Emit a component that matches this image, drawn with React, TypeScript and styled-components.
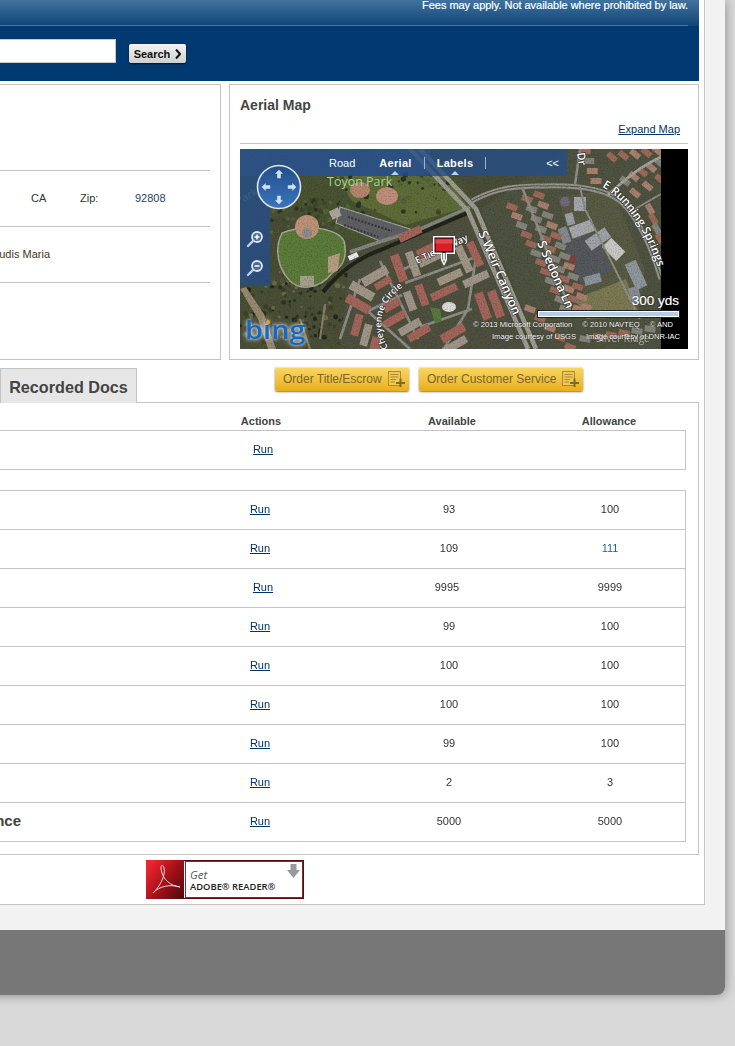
import React from "react";
import styled, { createGlobalStyle } from "styled-components";

const Global = createGlobalStyle`
  html, body { margin: 0; padding: 0; background: #d9d9d9; overflow: hidden; }
  body { font-family: "Liberation Sans", Arial, sans-serif; font-size: 11px; color: #333; }
`;

const Viewport = styled.div`
  width: 735px;
  height: 1046px;
  overflow: hidden;
`;
const Shell = styled.div`
  margin-left: -320px;
  width: 1045px;
  height: 995px;
  background: #f2f2f2;
  border-radius: 0 0 8px 8px;
  box-shadow: 0 0 12px rgba(0, 0, 0, 0.38);
  display: flex;
  flex-direction: column;
`;
const Panel = styled.div`
  width: 1025px;
  box-sizing: border-box;
  background: #fff;
  border-right: 1px solid #c4c4c4;
  border-bottom: 1px solid #c4c4c4;
  padding-right: 5px;
`;
const Footer = styled.footer`
  margin-top: 25px;
  height: 65px;
  background: #777;
  border-radius: 0 0 8px 8px;
`;

const Header = styled.header`
  height: 81px;
  background: #003a70;
`;
const HeaderGlow = styled.div`
  background: linear-gradient(#42729e, #0e4576);
  height: 26px;
`;
const FeeStrip = styled.div`
  height: 25px;
  margin-right: 11px;
  border-bottom: 1px solid #4b78a5;
  color: #fff;
  font-size: 11px;
  line-height: 11px;
  letter-spacing: -0.03px;
  text-align: right;
  -webkit-text-stroke: 0.2px #fff;
`;
const SearchRow = styled.div`
  display: flex;
  justify-content: flex-end;
  align-items: flex-start;
  gap: 13px;
  margin-top: 13px;
  padding-right: 513px;
`;
const SearchInput = styled.div`
  width: 420px;
  height: 24px;
  box-sizing: border-box;
  background: #fff;
  border: 1px solid #c9c9c9;
`;
const SearchButton = styled.button`
  margin-top: 5px;
  width: 57px;
  height: 19px;
  padding: 0;
  border: 0;
  border-radius: 2px;
  background: linear-gradient(#f4f4f4, #cfcfcf);
  box-shadow: 0 1px 2px rgba(0, 0, 0, 0.7);
  font: bold 11px "Liberation Sans", Arial, sans-serif;
  color: #111;
  display: flex;
  align-items: center;
  justify-content: center;
  gap: 5px;
`;

const Cards = styled.div`
  display: grid;
  grid-template-columns: 1fr 470px;
  gap: 8px;
  margin-top: 3px;
  height: 276px;
`;
const Card = styled.section`
  box-sizing: border-box;
  border: 1px solid #c4c4c4;
  background: #fff;
`;
const InfoCard = styled(Card)`
  padding-right: 10px;
`;
const InfoRow = styled.div<{ $h: number }>`
  height: ${(p) => p.$h}px;
  box-sizing: border-box;
  border-bottom: 1px solid #c4c4c4;
  padding-bottom: 2px;
  display: flex;
  justify-content: flex-end;
  align-items: center;
`;
const InfoCell = styled.span<{ $w: number; $blue?: boolean }>`
  width: ${(p) => p.$w}px;
  color: ${(p) => (p.$blue ? "#1f3f6e" : "#333")};
`;
const Owner = styled.span`
  margin-right: 160px;
  color: #4a3320;
  white-space: nowrap;
`;
const MapCard = styled(Card)`
  padding: 0 10px;
`;
const MapTitle = styled.h2`
  margin: 12px 0 0;
  font-size: 14px;
  line-height: 16px;
  font-weight: bold;
  color: #444;
`;
const ExpandRow = styled.div`
  margin-top: 10px;
  height: 20px;
  padding-right: 8px;
  text-align: right;
  line-height: 13px;
  border-bottom: 1px solid #c4c4c4;
`;
const A = styled.a`
  color: #003366;
  text-decoration: underline;
  font-size: 11px;
`;
const MapBox = styled.div`
  position: relative;
  margin-top: 5px;
  width: 448px;
  height: 200px;
  overflow: hidden;
  background: #000;
  svg { display: block; }
`;
const MapBar = styled.div`
  position: absolute;
  left: 0;
  top: 0;
  width: 327px;
  height: 27px;
  box-sizing: border-box;
  padding: 0 8px 0 89px;
  display: flex;
  align-items: center;
  gap: 12px;
  background: rgba(38, 78, 132, 0.8);
  color: #fff;
`;
const MapRail = styled.div`
  position: absolute;
  left: 0;
  top: 27px;
  width: 30px;
  height: 110px;
  box-sizing: border-box;
  padding: 54px 0 0 6px;
  display: flex;
  flex-direction: column;
  gap: 11px;
  background: rgba(38, 78, 132, 0.84);
  svg { flex: none; }
`;
const MapTab = styled.span<{ $on?: boolean }>`
  position: relative;
  font: ${(p) => (p.$on ? "bold" : "normal")} 11px "Liberation Sans", Arial, sans-serif;
  letter-spacing: ${(p) => (p.$on ? "0.3px" : "0")};
  &::after {
    content: "";
    display: ${(p) => (p.$on ? "block" : "none")};
    position: absolute;
    left: 50%;
    bottom: -6px;
    margin-left: -4px;
    border: 4px solid transparent;
    border-top: 0;
    border-bottom: 4px solid #bcd0ea;
  }
`;
const RoadTab = styled(MapTab)`
  margin-right: 12px;
`;
const CollapseTab = styled(MapTab)`
  margin-left: auto;
`;
const MapSep = styled.i`
  width: 1px;
  height: 12px;
  background: #9db4d2;
`;
const Compass = styled.div`
  position: absolute;
  left: 16px;
  top: 15px;
`;
const Pin = styled.div`
  position: absolute;
  left: 190px;
  top: 85px;
`;
const BingMark = styled.span`
  position: absolute;
  left: 5px;
  top: 165px;
  font: 600 25px/30px "Open Sans", sans-serif;
  color: #1668c4;
  transform: scaleX(1.16);
  transform-origin: left top;
  text-shadow: 0 0 3px rgba(255, 255, 255, 0.9), 0 0 6px rgba(255, 255, 255, 0.6);
`;
const BingDot = styled.i`
  position: absolute;
  left: 26px;
  top: 171px;
  width: 4px;
  height: 4px;
  border-radius: 50%;
  background: #f2a020;
`;
const ScaleBlock = styled.div`
  position: absolute;
  left: 298px;
  top: 144px;
  width: 141px;
  display: flex;
  flex-direction: column;
  gap: 2px;
`;
const ScaleLabel = styled.span`
  align-self: flex-end;
  color: #fff;
  font-size: 13.5px;
  line-height: 16px;
  text-shadow: 0 0 2px #000;
  -webkit-text-stroke: 0.2px #fff;
`;
const ScaleBar = styled.div`
  height: 6px;
  box-sizing: border-box;
  background: #b4cdec;
  border: 1px solid #fff;
  outline: 1px solid #222;
`;
const Credits = styled.div`
  position: absolute;
  left: 233px;
  top: 171px;
  display: flex;
  flex-direction: column;
  gap: 2px;
  color: #fff;
  font-size: 7.6px;
  line-height: 10px;
  white-space: nowrap;
  text-shadow: 0 0 1px #000;
`;
const CreditLine = styled.div`
  display: flex;
  gap: 10px;
`;
const CreditLineLow = styled(CreditLine)`
  padding-left: 19px;
`;

const ActionRow = styled.div`
  height: 42px;
  display: flex;
  align-items: flex-start;
  padding-left: 320px;
`;
const Tab = styled.div`
  box-sizing: border-box;
  margin-top: 8px;
  width: 137px;
  height: 35px;
  border: 1px solid #c4c4c4;
  border-bottom: 0;
  background: #e6e6e6;
  color: #444;
  font-size: 16.2px;
  font-weight: bold;
  line-height: 37px;
  text-align: center;
  position: relative;
  z-index: 1;
`;
const Orders = styled.div`
  display: flex;
  gap: 10px;
  margin: 7px 0 0 138px;
`;
const OrderBtn = styled.button<{ $w: number }>`
  box-sizing: border-box;
  width: ${(p) => p.$w}px;
  height: 24px;
  padding: 0 3px 0 8px;
  border: 0;
  border-radius: 2px;
  background: linear-gradient(#f8d863, #e9ae1e);
  box-shadow: 0 1px 2px rgba(0, 0, 0, 0.55), inset 0 1px 0 #fbe9a8;
  font: 12px "Liberation Sans", Arial, sans-serif;
  color: #7a6628;
  display: flex;
  align-items: center;
  justify-content: space-between;
  white-space: nowrap;
`;

const TablePanel = styled.section`
  height: 453px;
  box-sizing: border-box;
  border: 1px solid #c4c4c4;
  padding-right: 12px;
  background: #fff;
`;
const gridCols = `grid-template-columns: 1fr 212px 166px 154px;`;
const HeadRow = styled.div`
  display: grid;
  ${gridCols}
  height: 27px;
  align-items: end;
  font-weight: bold;
  color: #444;
  line-height: 13px;
  text-align: center;
`;
const HeadCell = styled.span<{ $shift?: number }>`
  padding-left: ${(p) => (p.$shift ?? 0) * 2}px;
  padding-bottom: 2px;
`;
const Group = styled.div`
  border: 1px solid #c4c4c4;
  border-left: 0;
  & + & { margin-top: 20px; }
`;
const Row = styled.div`
  display: grid;
  ${gridCols}
  height: 39px;
  box-sizing: border-box;
  padding-bottom: 2px;
  align-items: center;
  text-align: center;
  border-bottom: 1px solid #c4c4c4;
  &:last-child { height: 38px; border-bottom: 0; }
`;
const Cell = styled.span<{ $shift?: number; $blue?: boolean }>`
  padding-left: ${(p) => Math.max(p.$shift ?? 0, 0) * 2}px;
  padding-right: ${(p) => Math.max(-(p.$shift ?? 0), 0) * 2}px;
  color: ${(p) => (p.$blue ? "#1f5f9e" : "#333")};
  will-change: transform;
`;
const RowLabel = styled.span`
  text-align: right;
  padding: 0 132px 1px 0;
  font-size: 15px;
  font-weight: bold;
  color: #444;
  white-space: nowrap;
`;
const BadgeRow = styled.div`
  height: 49px;
  padding: 5px 0 0 466px;
  box-sizing: border-box;
`;
const Adobe = styled.div`
  width: 158px;
  height: 39px;
  display: flex;
`;
const AdobeMark = styled.div`
  width: 38px;
  flex: none;
  background: linear-gradient(125deg, #ee2530 10%, #a01018 55%, #4e0810 100%);
`;
const AdobeBox = styled.div`
  flex: 1;
  position: relative;
  background: #fff;
  border: 1px solid #5a0a12;
  border-left: 0;
  outline: 1px solid #7a2a30;
  outline-offset: -2px;
  padding: 7px 0 0 6px;
`;
const AdobeGet = styled.div`
  font: italic 11.5px/13px "Open Sans", sans-serif;
  color: #555;
`;
const AdobeName = styled.div`
  font: 600 9.4px/11px "Open Sans", sans-serif;
  color: #222;
  white-space: nowrap;
`;
const AdobeArrow = styled.svg`
  position: absolute;
  right: 3px;
  top: 3px;
`;

function mulberry(seed: number) {
  return () => {
    seed |= 0;
    seed = (seed + 0x6d2b79f5) | 0;
    let t = Math.imul(seed ^ (seed >>> 15), 1 | seed);
    t = (t + Math.imul(t ^ (t >>> 7), 61 | t)) ^ t;
    return ((t ^ (t >>> 14)) >>> 0) / 4294967296;
  };
}

function houses(key: string, x1: number, y1: number, x2: number, y2: number, n: number, rot: number, seed: number) {
  const r = mulberry(seed);
  const out: React.ReactNode[] = [];
  for (let i = 0; i < n; i++) {
    const x = x1 + ((x2 - x1) * i) / (n - 1);
    const y = y1 + ((y2 - y1) * i) / (n - 1);
    const v = r();
    const c = v > 0.55 ? "#9c6a58" : v > 0.25 ? "#86857c" : "#a98070";
    out.push(<rect key={key + i} x={x - 5.5} y={y - 3} width={11} height={6} fill={c} transform={`rotate(${rot} ${x} ${y})`} />);
  }
  return out;
}

function trees(key: string, n: number, x: number, y: number, w: number, h: number, seed: number, cols: string[]) {
  const r = mulberry(seed);
  const out: React.ReactNode[] = [];
  for (let i = 0; i < n; i++) {
    out.push(
      <circle key={key + i} cx={x + r() * w} cy={y + r() * h} r={0.8 + r() * 2.2} fill={cols[Math.floor(r() * cols.length)]} />
    );
  }
  return out;
}

const R = "#a3655b";
const G = "#a19688";
const longs: [number, number, number, number, number, string][] = [
  [159, 119, 9, 28, -20, R], [173, 115, 8, 26, -20, G], [135, 127, 28, 9, -30, G], [143, 134, 18, 7, -30, R],
  [122, 142, 26, 9, 30, G], [118, 155, 26, 9, 30, R], [152, 156, 18, 8, -30, R], [182, 146, 8, 22, -20, R],
  [170, 152, 8, 20, -20, G], [155, 170, 24, 8, -30, R], [210, 128, 26, 8, -25, G], [204, 143, 28, 8, -25, R],
  [236, 130, 27, 8, -25, G], [243, 157, 9, 28, -20, R], [256, 155, 9, 28, -20, R], [235, 105, 8, 26, -25, R],
  [224, 110, 8, 28, -25, G], [190, 100, 28, 9, -25, R], [190, 110, 24, 8, -25, G], [170, 178, 24, 8, -30, G],
  [179, 184, 24, 8, -30, R], [213, 184, 26, 9, -30, R], [117, 176, 8, 22, 15, R], [126, 186, 8, 22, 15, G],
  [215, 196, 26, 8, -30, G], [135, 198, 10, 20, 15, R], [170, 85, 24, 8, -25, R],
];

const forest = ["#2c3524", "#3a4329", "#6c6b4c", "#4e5236", "#23291c"];
const leafy = ["#2c3524", "#3f4a2a", "#55633a"];

function AerialMap() {
  return (
    <svg width={448} height={200} viewBox="0 0 448 200" role="img" aria-label="Aerial map">
      <defs>
        <filter id="grain" x="0" y="0" width="100%" height="100%">
          <feTurbulence type="fractalNoise" baseFrequency="0.7" numOctaves={2} seed={7} />
          <feColorMatrix values="0 0 0 0 0  0 0 0 0 0  0 0 0 0 0  0 0 0 1.6 -0.7" />
        </filter>
        <filter id="soft"><feGaussianBlur stdDeviation="0.4" /></filter>
        <path id="lblSprings" d="M362 38 C 385 50 410 85 422 134" />
        <path id="lblCircle" d="M148 199 C 134 172 142 150 170 133" />
      </defs>
      <g filter="url(#soft)">
        <rect width="448" height="200" fill="#4a4e38" />
        <path d="M0 130 L60 150 L120 110 L110 200 L0 200Z" fill="#4b5037" />
        <path d="M0 0H200L240 60L125 100L60 60L30 70L0 50Z" fill="#4a5433" />
        <path d="M96 27H205L228 58L165 76L112 52Z" fill="#5f6d38" />
        <path d="M0 0H190V27H0Z" fill="#47627a" />
        {trees("t1", 190, 0, 120, 115, 80, 21, forest)}
        {trees("t2", 90, 30, 50, 70, 40, 22, leafy)}
        {trees("t3", 60, 100, 25, 110, 40, 23, leafy)}
        <path d="M0 140 L18 170 L28 200 L36 200 L24 165 L6 138Z" fill="#968a70" />
        <path d="M60 170 L70 200 M85 155 L80 190" stroke="#8b8069" strokeWidth="2" fill="none" />
        {/* park */}
        <path d="M42 84 C 68 74 98 80 104 92 C 108 110 102 118 92 124 C 80 140 60 142 50 132 C 38 120 34 100 42 84Z" fill="#5c7b3a" stroke="#a5a590" strokeWidth="1.6" />
        <rect x="60" y="127" width="14" height="10" fill="#a5a08c" />
        <path d="M88 108 L100 104 L98 122 L88 124Z" fill="#b59e80" />
        <circle cx="67" cy="78" r="12" fill="#bd9378" />
        <circle cx="67" cy="84" r="5" fill="#8d8c8e" />
        <ellipse cx="120" cy="41" rx="10" ry="8" fill="#b68570" />
        <ellipse cx="147" cy="47" rx="11" ry="9" fill="#bf8f7b" />
        <path d="M100 58 L170 80 L165 88 L140 92 L96 74Z" fill="#5e6164" stroke="#a6a59a" strokeWidth="1.2" />
        <path d="M108 68 L152 82 M104 76 L138 88" stroke="#35373a" strokeWidth="2" strokeDasharray="2 1.5" />
        <rect x="90" y="60" width="10" height="9" fill="#aaa99c" transform="rotate(-25 95 64)" />
        {/* right side base */}
        <path d="M240 60 L300 200 H421 V0 H330Z" fill="#4f5340" />
        <path d="M110 100 L232 66 L284 200 H100Z" fill="#50513f" />
        {/* creek + park road */}
        <path d="M83 143 C 100 122 120 108 143 100 L 230 63" stroke="#20251a" strokeWidth="4" fill="none" />
        <path d="M110 103 L133 95 L180 80 L230 58" stroke="#85867e" strokeWidth="3.5" fill="none" />
        <rect x="108" y="105" width="10" height="5" fill="#eee" transform="rotate(-25 113 107)" />
        {/* school */}
        <path d="M318 48 L372 40 L405 120 L398 165 L350 165Z" fill="#595b45" />
        <path d="M322 92 L356 84 L372 122 L340 134 Z" fill="#55585c" />
        <path d="M335 150 L386 130 L400 168 L346 170Z" fill="#7b7a52" />
        <circle cx="325" cy="53" r="5" fill="#6f6a7d" />
        <rect x="334" y="48" width="12" height="14" fill="#a4a7ad" />
        <rect x="326" y="64" width="8" height="12" fill="#9da0a5" transform="rotate(-15 330 70)" />
        <rect x="330" y="74" width="24" height="12" fill="#a6a9ae" transform="rotate(-20 342 80)" />
        <rect x="320" y="78" width="9" height="16" fill="#858a90" transform="rotate(-20 325 86)" />
        <rect x="346" y="84" width="24" height="12" fill="#9fa3a8" transform="rotate(-35 358 90)" />
        <rect x="364" y="94" width="20" height="13" fill="#c9c8c4" transform="rotate(45 374 100)" />
        <rect x="344" y="126" width="17" height="9" fill="#8b949c" transform="rotate(-15 352 130)" />
        <rect x="390" y="112" width="12" height="28" fill="#8f969c" transform="rotate(-25 396 126)" />
        <rect x="390" y="138" width="10" height="16" fill="#8a9096" transform="rotate(-15 395 146)" />
        <circle cx="332" cy="110" r="4" fill="#83423f" />
        {/* houses right */}
        {houses("a", 272, 58, 325, 160, 12, 20, 1)}
        {houses("b", 287, 50, 338, 160, 12, 20, 2)}
        {houses("c", 299, 46, 346, 158, 12, 20, 3)}
        {houses("d", 345, 2, 356, 32, 4, 0, 4)}
        {houses("e", 372, 8, 418, 2, 5, 40, 5)}
        {houses("f", 385, 32, 420, 14, 5, 40, 6)}
        {houses("g", 395, 44, 420, 30, 3, 40, 7)}
        {houses("h", 410, 60, 420, 90, 4, 60, 8)}
        {houses("i", 290, 160, 330, 198, 5, 20, 9)}
        {houses("j", 345, 190, 410, 180, 6, 10, 10)}
        {/* big roads */}
        <path d="M170 0 L228 62 L288 200" stroke="#9c9c92" strokeWidth="4.5" fill="none" />
        <path d="M180 0 L236 60 L296 200" stroke="#9c9c92" strokeWidth="4.5" fill="none" />
        <path d="M232 52 C 250 42 270 36 305 37 C 340 36 365 40 380 52 C 400 70 412 100 421 130" stroke="#96968c" strokeWidth="5" fill="none" />
        <path d="M232 52 C 250 42 270 36 305 37 C 340 36 365 40 380 52 C 400 70 412 100 421 130" stroke="#4f504c" strokeWidth="1" fill="none" />
        <path d="M368 46 C 385 30 405 15 421 8" stroke="#a3a39a" strokeWidth="3" fill="none" />
        <path d="M282 38 L330 160 M340 0 L335 36" stroke="#8f8f86" strokeWidth="2.5" fill="none" />
        <path d="M395 60 L421 45 M340 38 L345 60 L400 170" stroke="#8e8e86" strokeWidth="2" fill="none" />
        {/* complex roads */}
        <path d="M112 148 L170 200 M140 112 L178 190 M165 134 L236 108 L228 160 L205 198 M160 122 L222 92 M180 178 L232 160 M128 162 L162 146 M100 190 L120 130" stroke="#8f8e85" strokeWidth="2.6" fill="none" />
        {longs.map(([x, y, w, h, rot, c], i) => (
          <rect key={i} x={x - w / 2} y={y - h / 2} width={w} height={h} fill={c} transform={`rotate(${rot} ${x} ${y})`} />
        ))}
        <ellipse cx="209" cy="158" rx="7" ry="5" fill="#dcdcd6" />
        <path d="M190 158 L200 160 L202 172 L195 174Z" fill="#577a3e" />
        <rect width="421" height="200" filter="url(#grain)" opacity="0.28" />
        <rect x="421" width="27" height="200" fill="#000" />
      </g>
      <g fontFamily="'Open Sans', sans-serif" fill="#fff" fontSize="12.5" stroke="#2a2a26" strokeWidth="1.1" paintOrder="stroke" fontWeight="600">
        <text x="87" y="37" fill="#a6d392" stroke="none" fontSize="12.5" fontWeight="400">Toyon Park</text>
        <text x="-2" y="56" fill="#9cb3cc" stroke="none" fontSize="11" fontWeight="400" transform="rotate(-28 -2 56)">Park</text>
        <text x="337" y="4" fontSize="11" transform="rotate(82 337 4)">Dr</text>
        <text x="238" y="84" fontSize="13" transform="rotate(67 238 84)">S Weir Canyon</text>
        <text x="297" y="94" transform="rotate(66 297 94)">S Sedona Ln</text>
        <text fontSize="11.5"><textPath href="#lblSprings">E Running Springs</textPath></text>
        <text fontSize="9"><textPath href="#lblCircle">Cheyenne Circle</textPath></text>
        <text x="177" y="115" fontSize="9.5" transform="rotate(-25 177 115)">E Tierra Way</text>
        <text x="356" y="193" fontSize="10" opacity="0.55" stroke="none" fontWeight="400">Silver Ridge</text>
      </g>
    </svg>
  );
}

const Arrow = ({ r }: { r: number }) => (
  <path d="M0 -10 L-4 -6 H-1.8 V-1.5 H1.8 V-6 H4Z" fill="#cfe0f2" transform={`rotate(${r} 22 22) translate(22 14.7)`} />
);

const MagIcon = ({ plus }: { plus?: boolean }) => (
  <svg width="18" height="18" viewBox="0 0 18 18" fill="none">
    <circle cx="11" cy="7" r="5" fill="#dfe9f5" fillOpacity="0.2" stroke="#dce8f6" strokeWidth="1.8" />
    <path d="M7.3 10.7 L2 16" stroke="#bcd0ea" strokeWidth="2.4" strokeLinecap="round" />
    <path d={plus ? "M8.5 7H13.5M11 4.5V9.5" : "M8.5 7H13.5"} stroke="#fff" strokeWidth="1.5" />
  </svg>
);

const DocPlus = () => (
  <svg width="18" height="16" viewBox="0 0 18 16" fill="none">
    <rect x="0.5" y="0.5" width="12" height="14" fill="#f0c94f" stroke="#a58a3a" />
    <path d="M2.5 3.5H10.5M2.5 6H10.5M2.5 8.5H8M2.5 11H7" stroke="#a58a3a" />
    <path d="M8 12H17M12.5 7.5V16" stroke="#7c6a28" strokeWidth="2" />
  </svg>
);

const rows: { a: string; b: string; run?: number; blue?: boolean; val?: number; label?: string }[] = [
  { a: "93", b: "100" },
  { a: "109", b: "111", blue: true },
  { a: "9995", b: "9999", run: 4, val: -1 },
  { a: "99", b: "100" },
  { a: "100", b: "100" },
  { a: "100", b: "100" },
  { a: "99", b: "100" },
  { a: "2", b: "3" },
  { a: "5000", b: "5000", label: "Allowance" },
];

export default function App() {
  return (
    <Viewport>
      <Global />
      <Shell>
        <Panel>
          <Header>
            <HeaderGlow>
              <FeeStrip>Fees may apply. Not available where prohibited by law.</FeeStrip>
            </HeaderGlow>
            <SearchRow>
              <SearchInput />
              <SearchButton>
                Search
                <svg width="6" height="10" viewBox="0 0 6 10"><path d="M1 0.5 L5 5 L1 9.5" fill="none" stroke="#111" strokeWidth="2" /></svg>
              </SearchButton>
            </SearchRow>
          </Header>

          <Cards>
            <InfoCard>
              <InfoRow $h={86} />
              <InfoRow $h={56}>
                <InfoCell $w={49}>CA</InfoCell>
                <InfoCell $w={55}>Zip:</InfoCell>
                <InfoCell $w={75} $blue>92808</InfoCell>
              </InfoRow>
              <InfoRow $h={56}>
                <Owner>Claudis Maria</Owner>
              </InfoRow>
            </InfoCard>
            <MapCard>
              <MapTitle>Aerial Map</MapTitle>
              <ExpandRow>
                <A href="#">Expand Map</A>
              </ExpandRow>
              <MapBox>
                <AerialMap />
                <MapBar>
                  <RoadTab>Road</RoadTab>
                  <MapTab $on>Aerial</MapTab>
                  <MapSep />
                  <MapTab $on>Labels</MapTab>
                  <MapSep />
                  <CollapseTab>&lt;&lt;</CollapseTab>
                </MapBar>
                <MapRail>
                  <MagIcon plus />
                  <MagIcon />
                </MapRail>
                <Compass>
                  <svg width="46" height="46" viewBox="-1 -1 46 46">
                    <defs>
                      <linearGradient id="cg" x1="0" y1="0" x2="0" y2="1">
                        <stop offset="0" stopColor="#234f8a" />
                        <stop offset="1" stopColor="#3a74bd" />
                      </linearGradient>
                    </defs>
                    <circle cx="22" cy="22" r="21.5" fill="url(#cg)" stroke="#dfe6ee" strokeWidth="1.6" />
                    <Arrow r={0} />
                    <Arrow r={90} />
                    <Arrow r={180} />
                    <Arrow r={270} />
                  </svg>
                </Compass>
                <Pin>
                  <svg width="28" height="34" viewBox="0 0 28 34">
                    <path d="M3 2H25V20H17V26L14 32L11 26V20H3Z" fill="#fff" />
                    <path d="M4.5 3.5H23.5V18.5H15.5V25L14 29L12.5 25V18.5H4.5Z" fill="#000" />
                    <rect x="5.5" y="4.5" width="17" height="13" fill="#d81f26" />
                    <rect x="5.5" y="5.5" width="17" height="4" fill="#e5474c" />
                    <path d="M13 19H15V26L14 28L13 26Z" fill="#e8e8e8" />
                  </svg>
                </Pin>
                <BingMark>bing</BingMark>
                <BingDot />
                <ScaleBlock>
                  <ScaleLabel>300 yds</ScaleLabel>
                  <ScaleBar />
                </ScaleBlock>
                <Credits>
                  <CreditLine>
                    <span>© 2013 Microsoft Corporation</span>
                    <span>© 2010 NAVTEQ</span>
                    <span>© AND</span>
                  </CreditLine>
                  <CreditLineLow>
                    <span>Image courtesy of USGS</span>
                    <span>Image courtesy of DNR-IAC</span>
                  </CreditLineLow>
                </Credits>
              </MapBox>
            </MapCard>
          </Cards>

          <ActionRow>
            <Tab>Recorded Docs</Tab>
            <Orders>
              <OrderBtn $w={134}>Order Title/Escrow<DocPlus /></OrderBtn>
              <OrderBtn $w={164}>Order Customer Service<DocPlus /></OrderBtn>
            </Orders>
          </ActionRow>

          <TablePanel>
            <HeadRow>
              <span />
              <HeadCell $shift={1}>Actions</HeadCell>
              <HeadCell $shift={3}>Available</HeadCell>
              <HeadCell>Allowance</HeadCell>
            </HeadRow>
            <Group>
              <Row>
                <span />
                <Cell $shift={4}><A href="#">Run</A></Cell>
                <span />
                <span />
              </Row>
            </Group>
            <Group>
              {rows.map((r, i) => (
                <Row key={i}>
                  {r.label ? <RowLabel>{r.label}</RowLabel> : <span />}
                  <Cell $shift={r.run ?? 1}><A href="#">Run</A></Cell>
                  <Cell $shift={r.val ?? 1}>{r.a}</Cell>
                  <Cell $shift={2} $blue={r.blue}>{r.b}</Cell>
                </Row>
              ))}
            </Group>
          </TablePanel>

          <BadgeRow>
            <Adobe>
              <AdobeMark>
                <svg width="38" height="39" viewBox="0 0 38 39" fill="none">
                  <path d="M7 33 C 13 28 20 15 18 8 C 17 4 14.5 5 15 9 C 16.5 20 25 26 34 27 C 25 24 13 26 7 33Z" stroke="#fff" strokeWidth="0.8" />
                </svg>
              </AdobeMark>
              <AdobeBox>
                <AdobeGet>Get</AdobeGet>
                <AdobeName>ADOBE® READER®</AdobeName>
                <AdobeArrow width="13" height="14" viewBox="0 0 13 14">
                  <path d="M3.5 0H9.5V6H13L6.5 14L0 6H3.5Z" fill="#999" />
                </AdobeArrow>
              </AdobeBox>
            </Adobe>
          </BadgeRow>
        </Panel>
        <Footer />
      </Shell>
    </Viewport>
  );
}
